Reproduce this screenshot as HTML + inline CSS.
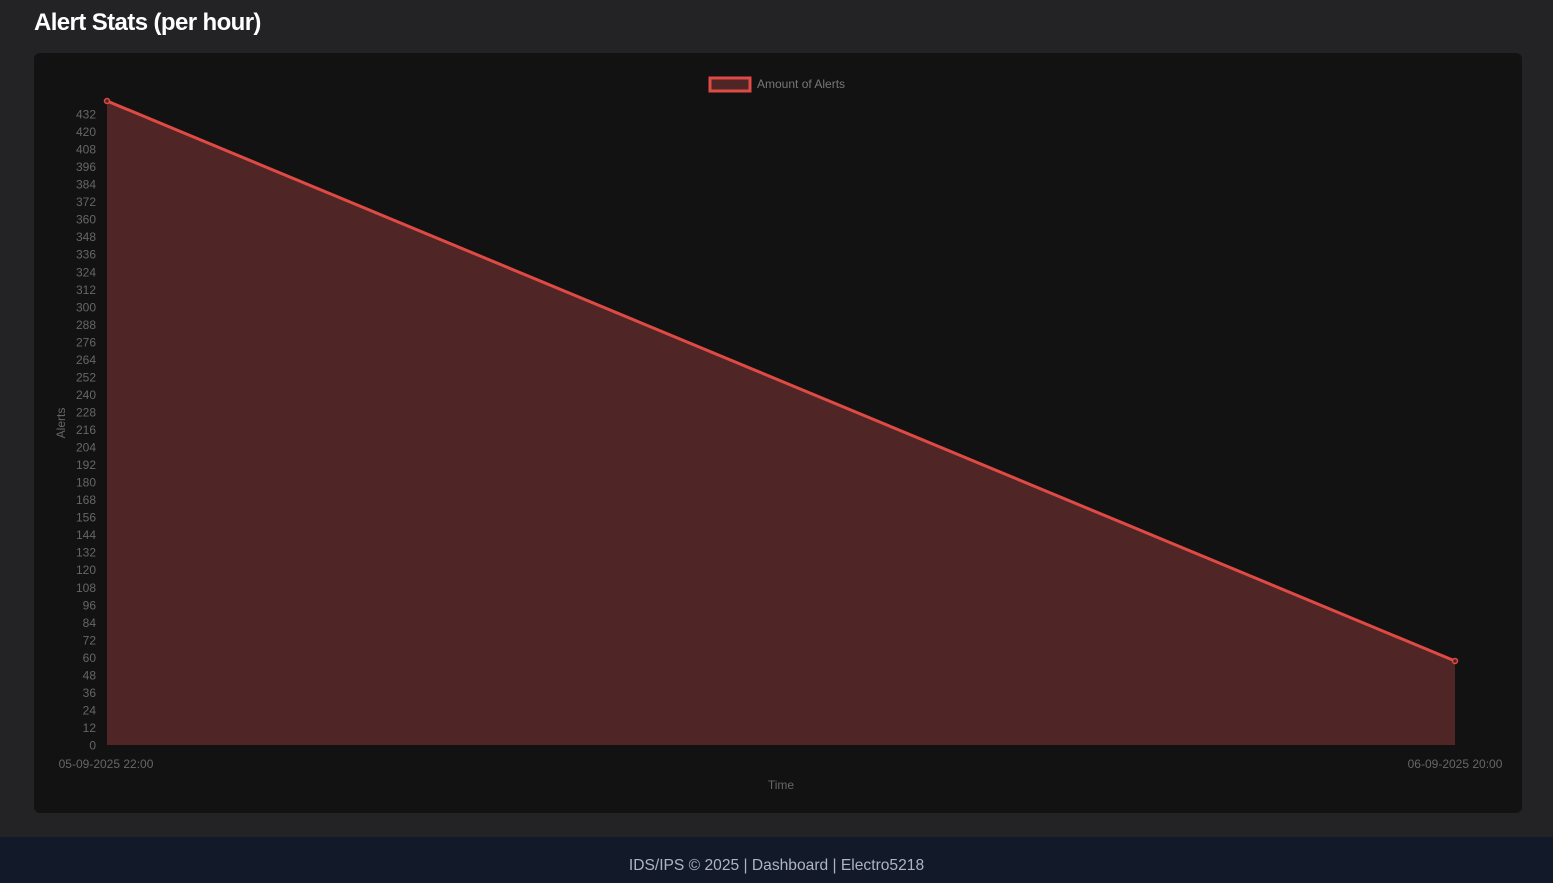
<!DOCTYPE html>
<html><head><meta charset="utf-8"><style>
html,body{margin:0;width:1553px;height:883px;overflow:hidden}
body{background:#232325;font-family:"Liberation Sans",sans-serif;position:relative}
h1{position:absolute;left:34px;top:9px;margin:0;font-size:24px;font-weight:bold;color:#fff;font-family:"Liberation Sans",sans-serif;letter-spacing:-0.6px}
.card{position:absolute;left:34px;top:53px;width:1488px;height:760px;background:#121212;border-radius:6px}
footer{position:absolute;left:0;top:837px;width:1553px;height:46px;background:#121929;color:#aeb4c0;font-size:15.6px;text-align:center;line-height:57px;font-family:"Liberation Sans",sans-serif}
svg{position:absolute;left:0;top:0}
</style></head><body>
<h1>Alert Stats (per hour)</h1>
<div class="card"></div>
<svg width="1553" height="883" font-family="Liberation Sans, sans-serif" font-size="12" fill="#666">
<polygon points="107,101 1455,661 1455,745 107,745" fill="#502525"/>
<line x1="107" y1="101" x2="1455" y2="661" stroke="#e04a45" stroke-width="3"/>
<circle cx="107" cy="101" r="2.5" fill="#502525" stroke="#e04a45" stroke-width="1.5"/>
<circle cx="1455" cy="661" r="2.5" fill="#502525" stroke="#e04a45" stroke-width="1.5"/>
<rect x="710" y="78" width="40" height="13" fill="#502525" stroke="#e04a45" stroke-width="3"/>
<text x="757" y="88" fill="#777">Amount of Alerts</text>
<g text-anchor="end" id="yl"></g>
<text x="106" y="768" text-anchor="middle">05-09-2025 22:00</text>
<text x="1455" y="768" text-anchor="middle">06-09-2025 20:00</text>
<text x="781" y="789" text-anchor="middle">Time</text>
<text transform="translate(65,423) rotate(-90)" text-anchor="middle">Alerts</text>
</svg>
<script>
var g=document.getElementById('yl'),s='';
for(var v=0;v<=432;v+=12){var y=745-v*631/432+4.5;s+='<text x="96" y="'+y.toFixed(1)+'">'+v+'</text>';}
g.innerHTML=s;
</script>
<footer>IDS/IPS © 2025 | Dashboard | Electro5218</footer>
</body></html>
